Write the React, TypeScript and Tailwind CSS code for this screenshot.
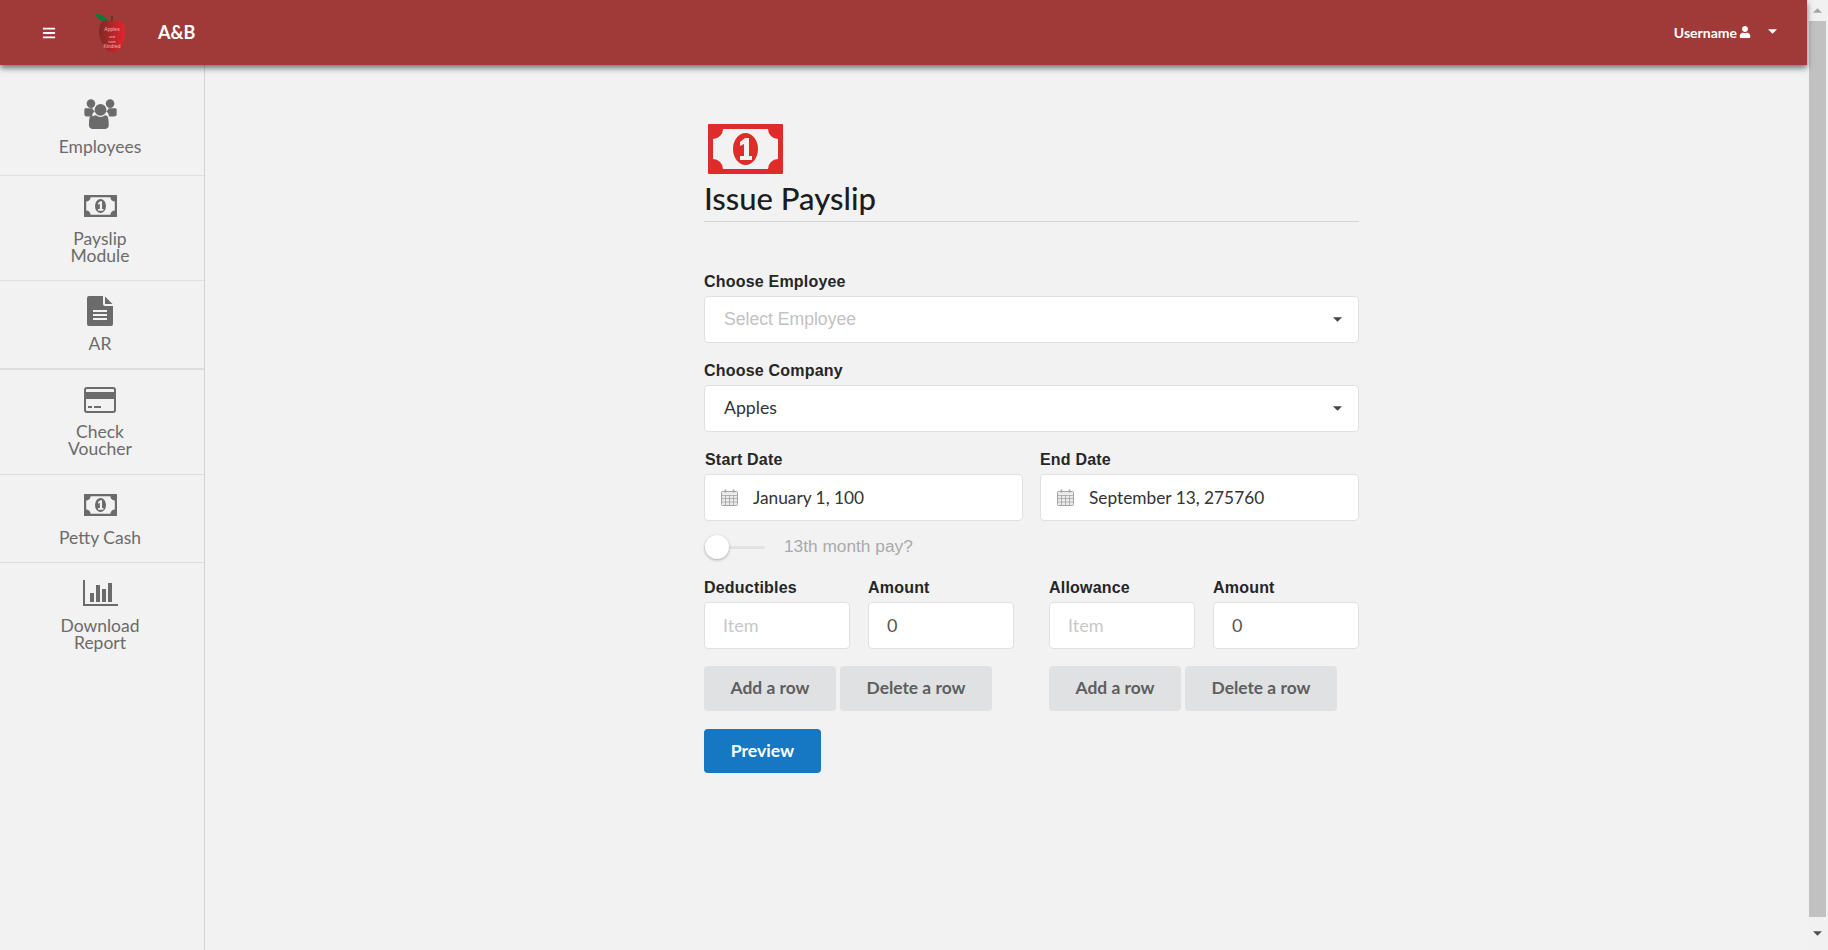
import React from 'react';
import { FaBars, FaUser } from 'react-icons/fa';

const lato = 'font-["Lato",sans-serif]';

const MoneyIcon: React.FC<{ className: string; fill: string }> = ({ className, fill }) => (
  <svg viewBox="0 0 75 50" className={className}>
    <path
      fill={fill}
      fillRule="evenodd"
      d="M1 0H74a1 1 0 0 1 1 1V49a1 1 0 0 1-1 1H1a1 1 0 0 1-1-1V1a1 1 0 0 1 1-1ZM15 5a10 10 0 0 1-10 10V35a10 10 0 0 1 10 10H60a10 10 0 0 1 10-10V15a10 10 0 0 1-10-10Z"
    />
    <ellipse cx="37.5" cy="25" rx="12.5" ry="16" fill={fill} />
    <path fill="#f2f2f2" d="M37 14h4v18h3v4H32v-4h4V20l-4 2v-4Z" />
  </svg>
);

const UsersIcon = () => (
  <svg viewBox="0 0 98 91" className="w-[33px] h-[30px]" fill="#6b6b6b">
    <circle cx="20" cy="14" r="13" />
    <circle cx="78" cy="14" r="13" />
    <path d="M4 28h20c3 6 5 8 8 10-5 3-8 7-9 15H8c-4 0-8-2-8-6V32c0-2 2-4 4-4ZM74 28h20c2 0 4 2 4 4v15c0 4-4 6-8 6H75c-1-8-4-12-9-15 3-2 5-4 8-10Z" />
    <circle cx="49" cy="33" r="18" />
    <path d="M28 52c4-4 8-3 12 0 6 3 12 3 18 0 4-3 8-4 12 0 3 4 4 12 4 28 0 6-4 11-10 11H24c-6 0-10-5-10-11 0-16 1-24 4-28 3-2 7-2 10 0Z" />
  </svg>
);

const FileIcon = () => (
  <svg viewBox="0 0 26 30" className="w-[26px] h-[30px]" fill="#6b6b6b">
    <path
      fillRule="evenodd"
      d="M2 0H16V8a2 2 0 0 0 2 2h8V28a2 2 0 0 1-2 2H2a2 2 0 0 1-2-2V2a2 2 0 0 1 2-2ZM6 14v2H20V14ZM6 18v2H20V18ZM6 22v2H20V22Z"
    />
    <path d="M18 0.5 25.5 8H18Z" />
  </svg>
);

const CardIcon = () => (
  <svg viewBox="0 0 32 26" className="w-[32px] h-[26px]" fill="#6b6b6b">
    <path
      fillRule="evenodd"
      d="M3 0H29a3 3 0 0 1 3 3V23a3 3 0 0 1-3 3H3a3 3 0 0 1-3-3V3a3 3 0 0 1 3-3ZM3 2a1 1 0 0 0-1 1V5H30V3a1 1 0 0 0-1-1ZM2 12V23a1 1 0 0 0 1 1H29a1 1 0 0 0 1-1V12ZM4 19h4v2H4ZM10 19h7v2H10Z"
    />
  </svg>
);

const ChartIcon = () => (
  <svg viewBox="0 0 35 26" className="w-[35px] h-[26px]" fill="#6b6b6b">
    <path d="M0 0h2V24H35v2H0Z" />
    <path d="M7 13h4v9H7ZM13 5h4v17h-4ZM19 9h4v13h-4ZM25 3h4v19h-4Z" />
  </svg>
);

const AppleLogo = () => (
  <svg viewBox="0 0 32 40" className="w-[32px] h-[40px]">
    <defs>
      <linearGradient id="appleFill" x1="0" x2="1" y1="0" y2="0">
        <stop offset="0" stopColor="#7d2a22" />
        <stop offset="0.55" stopColor="#b9242a" />
        <stop offset="1" stopColor="#e1262b" />
      </linearGradient>
    </defs>
    <path fill="#5c3a1e" d="M16 3h2l-.5 8h-1.5Z" />
    <path fill="#0d7a3a" d="M0 0c4 1 11 3 15 9-6 1-13-2-15-9Z" />
    <path
      fill="url(#appleFill)"
      d="M8 8c3-1 6 0 8 1 3-1 7-2 10-1 3 2 4 6 4 11 0 7-3 15-6 18-2 2-5 2-7 1-2 1-4 1-5-1C8 33 4 26 4 18c0-4 1-8 4-10Z"
    />
    <text x="17" y="18" textAnchor="middle" fontSize="5" fill="#f6b8b8" fontFamily="Liberation Sans">Apples</text>
    <text x="17" y="25" textAnchor="middle" fontSize="3.5" fill="#f6b8b8" fontFamily="Liberation Sans">and</text>
    <text x="17" y="30" textAnchor="middle" fontSize="3.5" fill="#f6b8b8" fontFamily="Liberation Sans">taste</text>
    <text x="17" y="35" textAnchor="middle" fontSize="5" fill="#f6b8b8" fontFamily="Liberation Sans">Kindred</text>
  </svg>
);

const CalendarIcon = () => (
  <svg viewBox="0 0 17 17" className="w-[17px] h-[17px]" fill="none" stroke="#a3a3a3">
    <rect x="0.5" y="2.5" width="16" height="14" rx="1" fill="#ececec" />
    <path d="M0.5 6.5h16M0.5 9.5h16M0.5 13h16M4.5 6.5v10M8.5 6.5v10M12.5 6.5v10" strokeWidth="0.8" />
    <path d="M4.5 0.5v3M12.5 0.5v3" strokeWidth="1.6" />
  </svg>
);

const Caret = ({ className }: { className: string }) => (
  <svg viewBox="0 0 8 4" className={className}>
    <path d="M0 0h8L4 4Z" fill="currentColor" />
  </svg>
);

const navItems = [
  { label: ['Employees'], icon: <UsersIcon />, box: 'h-[111px] pt-[34px]', gap: 'mt-[9px]' },
  { label: ['Payslip', 'Module'], icon: <MoneyIcon className="w-[33px] h-[22px]" fill="#6b6b6b" />, box: 'h-[105px] pt-[19px]', gap: 'mt-[13px]' },
  { label: ['AR'], icon: <FileIcon />, box: 'h-[89px] pt-[15px] border-b-2', gap: 'mt-[9px]' },
  { label: ['Check', 'Voucher'], icon: <CardIcon />, box: 'h-[105px] pt-[17px]', gap: 'mt-[10px]' },
  { label: ['Petty Cash'], icon: <MoneyIcon className="w-[33px] h-[22px]" fill="#6b6b6b" />, box: 'h-[88px] pt-[19px]', gap: 'mt-[13px]' },
  { label: ['Download', 'Report'], icon: <ChartIcon />, box: 'pt-[17px]', gap: 'mt-[11px]' }
];

const Label = ({ children, className = '' }: { children: React.ReactNode; className?: string }) => (
  <div className={`h-[19px] mb-[5px] text-[16px] leading-[19px] font-bold tracking-[0.2px] text-[#262626] font-["Liberation_Sans",sans-serif] ${className}`}>
    {children}
  </div>
);

const boxClass = 'h-[47px] bg-white border border-[#e0e0e0] rounded-[4px] flex items-center';

const SelectBox = ({ value, muted }: { value: string; muted?: boolean }) => (
  <div className={`${boxClass} pl-[19px] pr-[16px] justify-between`}>
    <span className={muted ? 'text-[17.6px] text-[#c2c2c2] font-["Liberation_Sans",sans-serif]' : `text-[17.7px] text-[#333] ${lato}`}>{value}</span>
    <Caret className="w-[9px] h-[5px] text-[#444]" />
  </div>
);

const DateBox = ({ value }: { value: string }) => (
  <div className={`${boxClass} px-[16px] gap-[15px]`}>
    <CalendarIcon />
    <span className={`text-[17.3px] text-[#333] ${lato}`}>{value}</span>
  </div>
);

const TextBox = ({ value, muted }: { value: string; muted?: boolean }) => (
  <div className={`${boxClass} px-[18px] text-[18px] ${lato} ${muted ? 'text-[#c8c8c8]' : 'text-[#555]'}`}>{value}</div>
);

const GrayButton = ({ children, className }: { children: React.ReactNode; className: string }) => (
  <button className={`h-[45px] bg-[#e0e1e2] rounded-[4px] text-[17.4px] font-bold text-[#5e5e5e] ${lato} ${className}`}>
    {children}
  </button>
);

const RowGroup = ({ name }: { name: string }) => (
  <div className="w-[310px]">
    <div className="flex gap-[18px]">
      <div className="w-[146px]">
        <Label>{name}</Label>
        <TextBox value="Item" muted />
      </div>
      <div className="w-[146px]">
        <Label>Amount</Label>
        <TextBox value="0" />
      </div>
    </div>
    <div className="flex gap-[4px] mt-[17px]">
      <GrayButton className="w-[132px]">Add a row</GrayButton>
      <GrayButton className="w-[152px]">Delete a row</GrayButton>
    </div>
  </div>
);

const App: React.FC = () => {
  return (
    <div className="h-[950px] flex overflow-hidden bg-[#f2f2f2]">
      <div className="flex-1 flex flex-col min-w-0">
        {/* Header */}
        <header className="relative z-10 h-[65px] shrink-0 bg-[#9f3a38] shadow-[0_3px_6px_rgba(0,0,0,0.55)] flex items-center text-white">
          <FaBars className="ml-[42px] w-[14px] h-[14px]" />
          <div className="ml-[39px]">
            <AppleLogo />
          </div>
          <span className={`ml-[31px] text-[18px] font-bold ${lato}`}>A&amp;B</span>
          <div className={`ml-auto flex items-center text-[14px] font-bold ${lato}`}>
            <span>Username</span>
            <FaUser className="w-[12px] h-[12px] ml-[2px] mb-[2px]" />
            <Caret className="w-[9px] h-[5px] ml-[17px] mr-[30px] mb-[2px]" />
          </div>
        </header>

        <div className="flex-1 flex min-h-0">
          {/* Sidebar */}
          <nav className={`w-[205px] shrink-0 border-r border-[#d4d4d4] ${lato}`}>
            {navItems.map((item) => (
              <div key={item.label[0]} className={`${item.box} pr-[4px] flex flex-col items-center border-b border-[#dedede] last:border-b-0 text-[17.5px] leading-[17px] text-[#6b6b6b] text-center`}>
                {item.icon}
                <div className={item.gap}>
                  {item.label.map((line) => (
                    <div key={line}>{line}</div>
                  ))}
                </div>
              </div>
            ))}
          </nav>

          {/* Form */}
          <main className="flex-1 pl-[499px] pt-[59px]">
            <div className="w-[655px]">
              <MoneyIcon className="ml-[4px] w-[75px] h-[50px]" fill="#e02b2b" />
              <h1 className={`mt-[4px] text-[31px] leading-[40px] font-medium text-[#1c1c1c] pb-[3px] border-b border-[#d4d4d4] ${lato}`}>Issue Payslip</h1>

              <div className="mt-[50px]">
                <Label>Choose Employee</Label>
                <SelectBox value="Select Employee" muted />
              </div>
              <div className="mt-[18px]">
                <Label>Choose Company</Label>
                <SelectBox value="Apples" />
              </div>
              <div className="mt-[18px] flex gap-[17px]">
                <div className="flex-1">
                  <Label className="pl-[1px]">Start Date</Label>
                  <DateBox value="January 1, 100" />
                </div>
                <div className="flex-1">
                  <Label>End Date</Label>
                  <DateBox value="September 13, 275760" />
                </div>
              </div>

              <div className='mt-[14px] h-[24px] flex items-center font-["Liberation_Sans",sans-serif] text-[17.3px] text-[#aaa]'>
                <div className="relative w-[61px] h-[24px] flex items-center">
                  <div className="w-full h-[3px] bg-[#e3e3e3] rounded-full" />
                  <div className="absolute left-[1px] top-0 w-[24px] h-[24px] rounded-full bg-white shadow-[0_1px_3px_rgba(0,0,0,0.3)]" />
                </div>
                <span className="ml-[19px]">13th month pay?</span>
              </div>

              <div className="mt-[19px] flex justify-between">
                <RowGroup name="Deductibles" />
                <RowGroup name="Allowance" />
              </div>

              <button className={`mt-[18px] w-[117px] h-[44px] bg-[#1678c2] rounded-[4px] text-white text-[17.6px] font-bold ${lato}`}>
                Preview
              </button>
            </div>
          </main>
        </div>
      </div>

      {/* Scrollbar */}
      <div className="w-[21px] shrink-0 bg-[#f1f1f1] flex flex-col items-center text-[#505050]">
        <div className="h-[21px] flex items-center justify-center">
          <Caret className="w-[9px] h-[5px] rotate-180 text-[#a3a3a3]" />
        </div>
        <div className="w-[17px] h-[896px] bg-[#c1c1c1]" />
        <div className="flex-1 flex items-center justify-center">
          <Caret className="w-[9px] h-[5px]" />
        </div>
      </div>
    </div>
  );
};

export default App;
